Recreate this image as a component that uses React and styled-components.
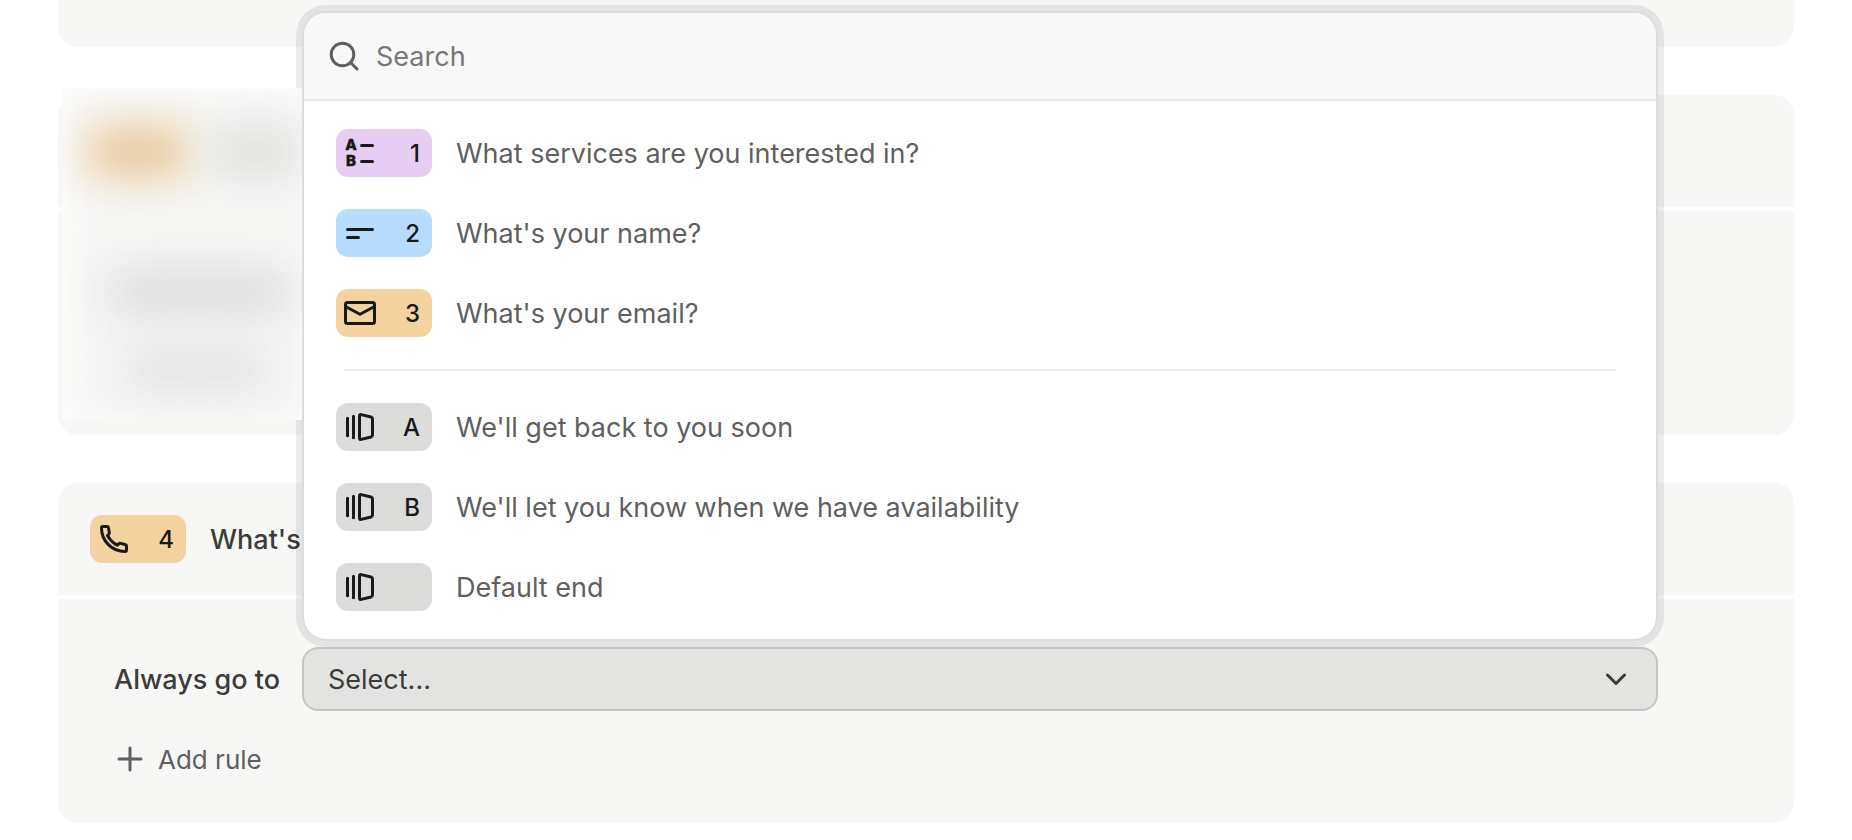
import styled, { createGlobalStyle } from "styled-components";

const questions = [
  { icon: "choice", color: "#e6cef2", mark: "1", title: "What services are you interested in?" },
  { icon: "text", color: "#b6ddfe", mark: "2", title: "What's your name?" },
  { icon: "mail", color: "#f5d3a1", mark: "3", title: "What's your email?" },
];

const endings = [
  { icon: "ending", color: "#dcdcdb", mark: "A", title: "We'll get back to you soon" },
  { icon: "ending", color: "#dcdcdb", mark: "B", title: "We'll let you know when we have availability" },
  { icon: "ending", color: "#dcdcdb", mark: "", title: "Default end" },
];

const shapes = {
  choice: (
    <>
      <text x="7" y="13">A</text>
      <text x="7" y="29">B</text>
      <path d="M17.5 8.5H28.5M17.5 24.5H28.5" />
    </>
  ),
  text: <path d="M3.5 12.5H28.5M3.5 20.5H14.5" />,
  mail: (
    <>
      <rect x="1.5" y="5.5" width="29" height="21" rx="2" />
      <path d="M1.5 9.5L16 17.3L30.5 9.5" />
    </>
  ),
  ending: (
    <path d="M3.5 7.3V24.7M9.5 5.3V26.7M15.5 5Q15.5 3.2 17.2 3.6L27 6Q28.5 6.4 28.5 8V24Q28.5 25.6 27 26L17.2 28.4Q15.5 28.8 15.5 27Z" />
  ),
  phone: (
    <path d="M5 3.5H9Q10.3 3.5 10.5 5L11.3 9.5Q11.5 10.5 10.8 11.3L9.5 12.5Q13 19 19.3 22.2L20.7 21Q21.5 20.2 22.5 20.4L27 21.5Q28.5 21.8 28.5 23V27Q28.5 28.5 27 28.5C14 28.5 3.5 18 3.5 5Q3.5 3.5 5 3.5Z" />
  ),
  search: (
    <>
      <circle cx="14.5" cy="14.5" r="11.3" />
      <path d="M22.5 22.5L29 29" />
    </>
  ),
  plus: <path d="M16 5V27M5 16H27" />,
  chevron: <path d="M7.5 12L16 20.5L24.5 12" />,
};

const Icon = ({ name }) => (
  <Svg viewBox="0 0 32 32" aria-hidden="true">
    {shapes[name]}
  </Svg>
);

const Badge = ({ icon, color, mark }) => (
  <BadgeBox $color={color}>
    <Icon name={icon} />
    <span>{mark}</span>
  </BadgeBox>
);

const Option = ({ icon, color, mark, title }) => (
  <li>
    <OptionButton type="button">
      <Badge icon={icon} color={color} mark={mark} />
      <span>{title}</span>
    </OptionButton>
  </li>
);

const JumpMenu = () => (
  <>
    <Ring />
    <Popover>
      <SearchBar>
        <Icon name="search" />
        <SearchInput type="text" placeholder="Search" aria-label="Search" />
      </SearchBar>
      <Menu>
        <List>
          {questions.map((item) => (
            <Option key={item.title} {...item} />
          ))}
        </List>
        <Divider />
        <List>
          {endings.map((item) => (
            <Option key={item.title} {...item} />
          ))}
        </List>
      </Menu>
    </Popover>
  </>
);

const App = () => {
  return (
    <Page>
      <GlobalStyle />
      <CardEnd />
      <Card>
        <CardHeader />
        <CardBody />
        <Redacted aria-hidden="true">
          <Smudges $top={40}>
            <Smudge $left={24} $width={104} $height={48} $color="#e5c593" />
            <Smudge $left={20} $width={92} $height={44} $color="#dbdbd9" />
          </Smudges>
          <Smudges $top={92}>
            <Smudge $left={44} $width={184} $height={44} $color="#dadad9" />
          </Smudges>
          <Smudges $top={28}>
            <Smudge $left={60} $width={148} $height={44} $color="#e1e1e0" />
          </Smudges>
        </Redacted>
      </Card>
      <Card>
        <CardHeader>
          <Badge icon="phone" color="#f5d3a1" mark="4" />
          <Title>What's</Title>
        </CardHeader>
        <CardBody>
          <Rule>
            <RuleLabel htmlFor="goto">Always go to</RuleLabel>
            <SelectWrap>
              <JumpMenu />
              <Select id="goto">
                <option>Select...</option>
              </Select>
              <Chevron>
                <Icon name="chevron" />
              </Chevron>
            </SelectWrap>
          </Rule>
          <AddButton type="button">
            <Icon name="plus" />
            Add rule
          </AddButton>
        </CardBody>
      </Card>
    </Page>
  );
};
export default App;

const GlobalStyle = createGlobalStyle`
  * {
    box-sizing: border-box;
  }

  body {
    margin: 0;
    background-color: white;
    font-family: Inter, "Liberation Sans", sans-serif;
    font-size: 27px;
    color: #3c3c3b;
  }

  button,
  input,
  select {
    font: inherit;
  }
`;

const Page = styled.main`
  display: flex;
  flex-direction: column;
  gap: 48px;
  padding: 0 58px 16px;
`;

const CardEnd = styled.div`
  height: 47px;
  background-color: #f7f7f5;
  border-radius: 0 0 20px 20px;
`;

const Card = styled.section`
  position: relative;
  display: flex;
  flex-direction: column;
  gap: 4px;
`;

const CardHeader = styled.header`
  display: flex;
  align-items: center;
  gap: 24px;
  height: 112px;
  padding: 0 32px;
  background-color: #f7f7f5;
  border-radius: 20px 20px 0 0;
`;

const CardBody = styled.div`
  min-height: 224px;
  padding: 48px 136px 40px 56px;
  background-color: #f7f7f5;
  border-radius: 0 0 20px 20px;
`;

const Title = styled.span`
  font-weight: 500;
`;

const Svg = styled.svg`
  flex: none;
  display: block;
  width: 32px;
  height: 32px;
  fill: none;
  stroke: currentColor;
  stroke-width: 3;
  stroke-linecap: round;
  stroke-linejoin: round;

  text {
    font-size: 15px;
    font-weight: 800;
    text-anchor: middle;
    fill: currentColor;
    stroke-width: 0.5;
  }
`;

const BadgeBox = styled.span`
  flex: none;
  display: flex;
  align-items: center;
  justify-content: space-between;
  width: 96px;
  height: 48px;
  padding: 0 12px 0 8px;
  border-radius: 12px;
  background-color: ${(props) => props.$color};
  color: #191919;
  font-size: 24px;
  font-weight: 500;
`;

const Rule = styled.div`
  display: flex;
  align-items: center;
`;

const RuleLabel = styled.label`
  flex: none;
  width: 188px;
  font-weight: 500;
`;

const SelectWrap = styled.div`
  position: relative;
  flex: 1;
`;

const Select = styled.select`
  display: block;
  width: 100%;
  height: 64px;
  padding: 0 64px 0 24px;
  appearance: none;
  border: 2px solid #c5c5c4;
  border-radius: 16px;
  background-color: #e3e3e1;
  color: #3c3c3b;
`;

const Chevron = styled.span`
  position: absolute;
  top: 16px;
  right: 26px;
  pointer-events: none;
`;

const AddButton = styled.button`
  display: flex;
  align-items: center;
  gap: 12px;
  height: 48px;
  margin-top: 24px;
  padding: 0;
  border: none;
  background: none;
  color: #5f5f5f;
  font-size: 26px;
`;

const Ring = styled.div`
  position: absolute;
  z-index: 1;
  bottom: 100%;
  left: -6px;
  right: -6px;
  height: 642px;
  border-radius: 30px;
  background-color: rgba(0, 0, 0, 0.08);
`;

const Popover = styled.div`
  position: absolute;
  z-index: 3;
  bottom: 100%;
  left: 0;
  right: 0;
  margin-bottom: 6px;
  border: 2px solid #dcdcdc;
  border-radius: 24px;
  background-color: white;
  overflow: hidden;
`;

const SearchBar = styled.div`
  display: flex;
  align-items: center;
  gap: 16px;
  height: 88px;
  padding: 0 24px;
  border-bottom: 2px solid #e9e9e9;
  background-color: #f8f8f8;
  color: #5f5f5f;
`;

const SearchInput = styled.input`
  flex: 1;
  min-width: 0;
  padding: 0;
  border: none;
  outline: none;
  background: none;
  color: #3c3c3b;

  &::placeholder {
    color: #777777;
    opacity: 1;
  }
`;

const Menu = styled.div`
  padding: 12px 0;
`;

const List = styled.ul`
  margin: 0;
  padding: 0;
  list-style: none;
`;

const OptionButton = styled.button`
  display: flex;
  align-items: center;
  gap: 24px;
  width: 100%;
  height: 80px;
  padding: 0 32px;
  border: none;
  background: none;
  color: #5f5f5f;
  text-align: left;
`;

const Divider = styled.hr`
  height: 2px;
  margin: 16px 40px;
  border: none;
  background-color: #ececec;
`;

const Redacted = styled.div`
  position: absolute;
  z-index: 2;
  top: -7px;
  left: 4px;
  width: 240px;
  height: 332px;
  background-color: #f7f7f6;
  box-shadow: inset 8px 4px 28px #fdfdfc;
  overflow: hidden;
`;

const Smudges = styled.div`
  display: flex;
  align-items: center;
  height: 48px;
  padding-top: ${(props) => props.$top}px;
  box-sizing: content-box;
`;

const Smudge = styled.span`
  flex: none;
  width: ${(props) => props.$width}px;
  height: ${(props) => props.$height}px;
  margin-left: ${(props) => props.$left}px;
  background-color: ${(props) => props.$color};
  border-radius: 20px;
  filter: blur(22px);
`;
